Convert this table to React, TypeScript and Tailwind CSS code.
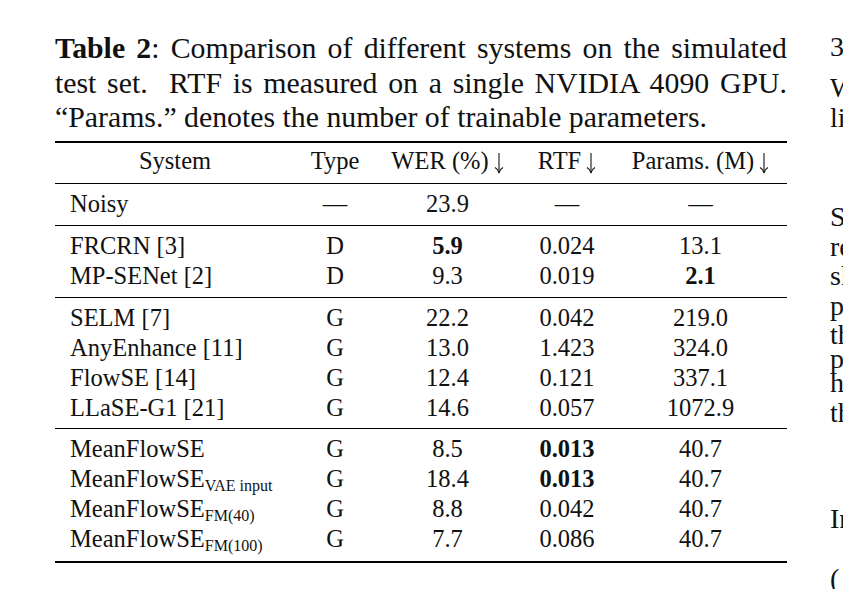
import type { ReactNode } from 'react';

type Row = {
  system: ReactNode;
  type: string;
  wer: ReactNode;
  rtf: ReactNode;
  params: ReactNode;
};

const cols = 'grid h-[30px] grid-cols-[240px_80px_145px_94px_173px] items-center text-center';

// thin LaTeX style \downarrow
function Down() {
  return (
    <svg
      viewBox="0 0 10 22"
      className="ml-[5px] inline-block h-[22px] w-[10px] align-[-5px]"
      fill="none"
      stroke="currentColor"
      strokeWidth="1.1"
    >
      <path d="M5 1V20.5" />
      <path d="M1 15.5C3 16.5 4.4 18.5 5 21C5.6 18.5 7 16.5 9 15.5" />
    </svg>
  );
}

const groups: Row[][] = [
  [{ system: 'Noisy', type: '—', wer: '23.9', rtf: '—', params: '—' }],
  [
    { system: 'FRCRN [3]', type: 'D', wer: <b>5.9</b>, rtf: '0.024', params: '13.1' },
    { system: 'MP-SENet [2]', type: 'D', wer: '9.3', rtf: '0.019', params: <b>2.1</b> },
  ],
  [
    { system: 'SELM [7]', type: 'G', wer: '22.2', rtf: '0.042', params: '219.0' },
    { system: 'AnyEnhance [11]', type: 'G', wer: '13.0', rtf: '1.423', params: '324.0' },
    { system: 'FlowSE [14]', type: 'G', wer: '12.4', rtf: '0.121', params: '337.1' },
    { system: 'LLaSE-G1 [21]', type: 'G', wer: '14.6', rtf: '0.057', params: '1072.9' },
  ],
  [
    { system: 'MeanFlowSE', type: 'G', wer: '8.5', rtf: <b>0.013</b>, params: '40.7' },
    {
      system: (
        <>
          MeanFlowSE<sub className="text-[16px]">VAE input</sub>
        </>
      ),
      type: 'G',
      wer: '18.4',
      rtf: <b>0.013</b>,
      params: '40.7',
    },
    {
      system: (
        <>
          MeanFlowSE<sub className="text-[16px]">FM(40)</sub>
        </>
      ),
      type: 'G',
      wer: '8.8',
      rtf: '0.042',
      params: '40.7',
    },
    {
      system: (
        <>
          MeanFlowSE<sub className="text-[16px]">FM(100)</sub>
        </>
      ),
      type: 'G',
      wer: '7.7',
      rtf: '0.086',
      params: '40.7',
    },
  ],
];

const groupPad = ['pt-[6px] pb-[5px]', 'pt-[6px] pb-[5px]', 'pt-[6px] pb-[4px]', 'pt-[6px] pb-[6px]'];

function DataRow({ row }: { row: Row }) {
  return (
    <div className={cols}>
      <div className="pl-[15px] text-left whitespace-nowrap">{row.system}</div>
      <div>{row.type}</div>
      <div>{row.wer}</div>
      <div>{row.rtf}</div>
      <div>{row.params}</div>
    </div>
  );
}

function ResultsTable() {
  return (
    <div className="mt-[6px] text-[24.5px] leading-none">
      <div className="h-[2px] bg-black" />
      <div className="pt-[4px] pb-[6px]">
        <div className={cols}>
          <div>System</div>
          <div>Type</div>
          <div className="whitespace-nowrap">
            WER (%)
            <Down />
          </div>
          <div className="whitespace-nowrap">
            RTF
            <Down />
          </div>
          <div className="whitespace-nowrap">
            Params. (M)
            <Down />
          </div>
        </div>
      </div>
      {groups.map((g, i) => (
        <div key={i}>
          <div className="h-px bg-black" />
          <div className={groupPad[i]}>
            {g.map((r, j) => (
              <DataRow key={j} row={r} />
            ))}
          </div>
        </div>
      ))}
      <div className="h-[2px] bg-black" />
    </div>
  );
}

// next column of the paper, cut off by the right edge
function NextColumn() {
  return (
    <div className="min-w-0 flex-1 overflow-hidden whitespace-nowrap pt-[32px] text-[28px] leading-[30px]">
      <div className="h-[30px]">3.3. Results</div>
      <div className="mt-[11px] h-[30px]">We compare</div>
      <div className="h-[30px]">lists the</div>
      <div className="mt-[69px] h-[29.5px]">Speech</div>
      <div className="h-[29.5px]">results</div>
      <div className="h-[29.5px]">shows</div>
      <div className="h-[29.5px]">performs</div>
      <div className="h-[29.5px]">the</div>
      <div className="mt-[-6px] h-[24px]">perform</div>
      <div className="h-[30px]">has</div>
      <div className="h-[30px]">than</div>
      <div className="mt-[76px] h-[30px]">In</div>
      <div className="mt-[30px] h-[30px]">(</div>
    </div>
  );
}

export default function App() {
  return (
    <div className="flex h-[589px] w-[843px] overflow-hidden bg-white pl-[55px] font-['Liberation_Serif','Times_New_Roman',serif] text-[#111]">
      <div className="w-[732px] shrink-0 pt-[31px]">
        <div className="text-[29.8px] leading-[34.5px]">
          <div className="text-justify [text-align-last:justify]">
            <b>Table 2</b>: Comparison of different systems on the simulated
          </div>
          <div className="text-justify [text-align-last:justify]">
            test set.&nbsp; RTF is measured on a single NVIDIA 4090 GPU.
          </div>
          <div>“Params.” denotes the number of trainable parameters.</div>
        </div>
        <ResultsTable />
      </div>
      <div className="w-[43px] shrink-0" />
      <NextColumn />
    </div>
  );
}
